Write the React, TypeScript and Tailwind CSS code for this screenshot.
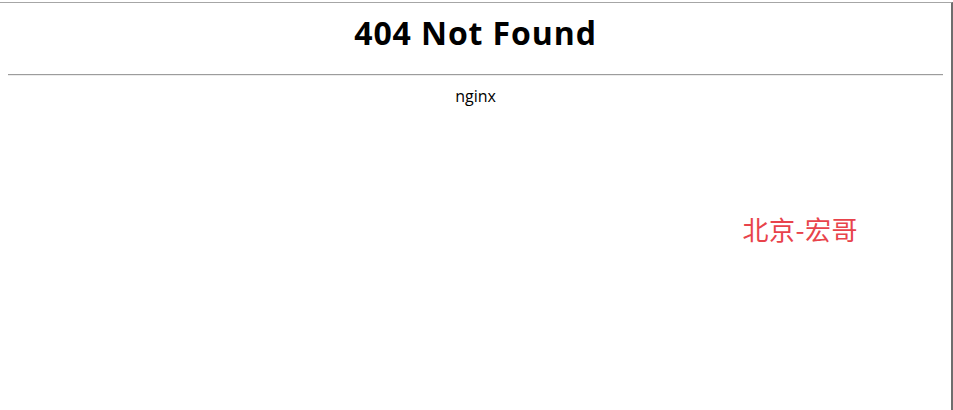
export default function App() {
  return (
    <div className="h-[410px] w-[953px] bg-white pt-[2px]" style={{ fontFamily: '"Open Sans", "Noto Sans", sans-serif' }}>
      <div className="h-[408px] w-[953px] border-t border-r-2 border-t-[#a6a6a6] border-r-[#6e6e6e] text-black">
        <h1 className="pt-[10px] text-center text-[32px] font-bold leading-[40px] tracking-[0.9px]">404 Not Found</h1>
        <div className="mx-2 mt-[21px] h-[2px] border-t border-b border-t-[#9c9c9c] border-b-[#ececec]" />
        <p className="mt-[8px] text-center text-[16px] leading-[24px]">nginx</p>
        <div className="mt-[104px] flex justify-end pr-[93px]">
          <span
            className="text-[26px] leading-[34px] tracking-[0.5px] text-[#e8434b]"
            style={{ fontFamily: '"Noto Sans CJK SC", sans-serif' }}
          >
            北京-宏哥
          </span>
        </div>
      </div>
    </div>
  )
}
